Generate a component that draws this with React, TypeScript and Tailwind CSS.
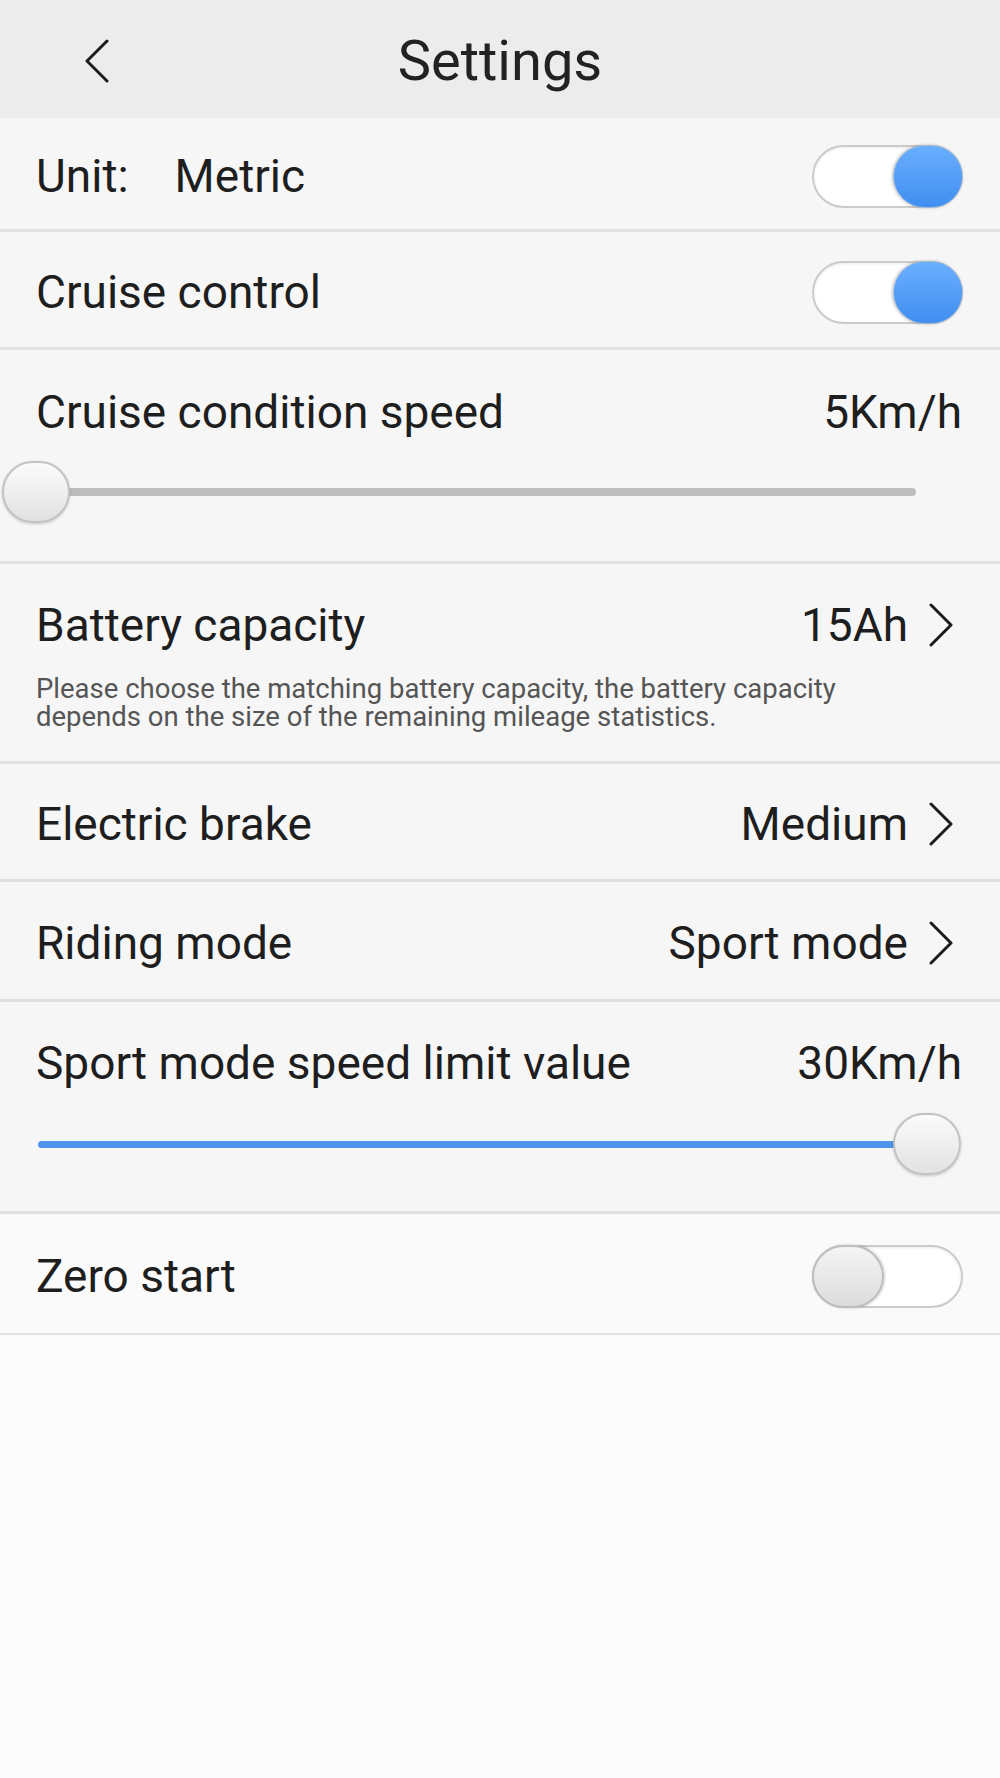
import React from "react";

const font = { fontFamily: "Roboto, 'Noto Sans', Arial, sans-serif" };

function Chevron({ dir = "right" }: { dir?: "left" | "right" }) {
  return (
    <svg width="26" height="44" viewBox="0 0 26 44" fill="none" className="shrink-0">
      {dir === "right" ? (
        <path d="M3 2 L23 22 L3 42" stroke="#1c1c1c" strokeWidth="3" strokeLinecap="round" strokeLinejoin="round" />
      ) : (
        <path d="M23 2 L3 22 L23 42" stroke="#1c1c1c" strokeWidth="3" strokeLinecap="round" strokeLinejoin="round" />
      )}
    </svg>
  );
}

function Toggle({ on }: { on: boolean }) {
  return (
    <div
      className={`flex h-[63px] w-[151px] items-center rounded-full border-2 border-[#cbcbcb] bg-white shadow-[inset_0_1px_3px_rgba(0,0,0,0.08)] ${
        on ? "justify-end" : "justify-start"
      }`}
    >
      {on ? (
        <div className="-mr-[2px] h-[63px] w-[70px] rounded-full border border-[#9db8d6] bg-gradient-to-b from-[#6aafff] to-[#3f8ef0] shadow-[-1px_0_3px_rgba(0,0,0,0.25)]" />
      ) : (
        <div className="-ml-[2px] h-[63px] w-[72px] rounded-full border-2 border-[#bdbdbd] bg-gradient-to-b from-[#f4f4f4] to-[#dcdcdc] shadow-[1px_0_3px_rgba(0,0,0,0.2)]" />
      )}
    </div>
  );
}

function Thumb() {
  return (
    <div className="h-[62px] w-[68px] rounded-full border-2 border-[#c2c2c2] bg-gradient-to-b from-[#fbfbfb] to-[#e2e2e2] shadow-[0_1px_3px_rgba(0,0,0,0.2)]" />
  );
}

export default function App() {
  const label = "text-[46px] leading-[52px] text-[#1e1e1e]";
  const row = "border-b-[3px] border-[#e0e0e0] bg-[#f6f6f6]";
  return (
    <div style={font} className="min-h-[1778px] w-[1000px] bg-[#fcfcfc]">
      {/* Header */}
      <div className="grid h-[118px] grid-cols-[1fr_auto_1fr] items-center bg-[#ececec]">
        <div className="pl-[84px] pt-[4px]">
          <Chevron dir="left" />
        </div>
        <div className="pt-[4px] text-[56px] leading-[60px] text-[#222]">Settings</div>
        <div />
      </div>

      {/* Unit */}
      <div className={`${row} flex h-[114px] items-center justify-between pl-[36px] pr-[37px] pt-[5px]`}>
        <div className={`${label} flex gap-[46px]`}>
          <span>Unit:</span>
          <span>Metric</span>
        </div>
        <Toggle on />
      </div>

      {/* Cruise control */}
      <div className={`${row} flex h-[118px] items-center justify-between pl-[36px] pr-[37px] pt-[5px]`}>
        <div className={label}>Cruise control</div>
        <Toggle on />
      </div>

      {/* Cruise condition speed */}
      <div className={`${row} h-[214px] pt-[36px]`}>
        <div className="flex items-center justify-between pl-[36px] pr-[38px]">
          <div className={label}>Cruise condition speed</div>
          <div className={label}>5Km/h</div>
        </div>
        <div className="relative mt-[22px] flex h-[64px] items-center">
          <div className="ml-[36px] mr-[84px] h-[8px] flex-1 rounded-full bg-[#bdbdbd]" />
          <div className="absolute left-[2px] top-[1px]">
            <Thumb />
          </div>
        </div>
      </div>

      {/* Battery capacity */}
      <div className={`${row} h-[200px] pt-[35px]`}>
        <div className="flex items-center justify-between pl-[36px] pr-[46px]">
          <div className={label}>Battery capacity</div>
          <div className="flex items-center gap-[20px]">
            <div className={label}>15Ah</div>
            <Chevron />
          </div>
        </div>
        <div className="mt-[24px] pl-[36px] pr-[140px] text-[27.5px] leading-[28px] text-[#555]">
          Please choose the matching battery capacity, the battery capacity depends on the size of the remaining
          mileage statistics.
        </div>
      </div>

      {/* Electric brake */}
      <div className={`${row} flex h-[118px] items-center justify-between pl-[36px] pr-[46px] pt-[5px]`}>
        <div className={label}>Electric brake</div>
        <div className="flex items-center gap-[20px]">
          <div className={label}>Medium</div>
          <Chevron />
        </div>
      </div>

      {/* Riding mode */}
      <div className={`${row} flex h-[120px] items-center justify-between pl-[36px] pr-[46px] pt-[5px]`}>
        <div className={label}>Riding mode</div>
        <div className="flex items-center gap-[20px]">
          <div className={label}>Sport mode</div>
          <Chevron />
        </div>
      </div>

      {/* Sport mode speed limit value */}
      <div className={`${row} h-[212px] pt-[35px]`}>
        <div className="flex items-center justify-between pl-[36px] pr-[38px]">
          <div className={label}>Sport mode speed limit value</div>
          <div className={label}>30Km/h</div>
        </div>
        <div className="relative mt-[23px] flex h-[64px] items-center">
          <div className="ml-[38px] mr-[96px] h-[7px] flex-1 rounded-full bg-[#4f94ea]" />
          <div className="absolute left-[893px] top-[1px]">
            <Thumb />
          </div>
        </div>
      </div>

      {/* Zero start */}
      <div className="flex h-[121px] items-center justify-between border-b-[2px] border-[#e2e2e2] bg-[#fafafa] pl-[36px] pr-[37px] pt-[5px]">
        <div className={label}>Zero start</div>
        <Toggle on={false} />
      </div>
    </div>
  );
}
